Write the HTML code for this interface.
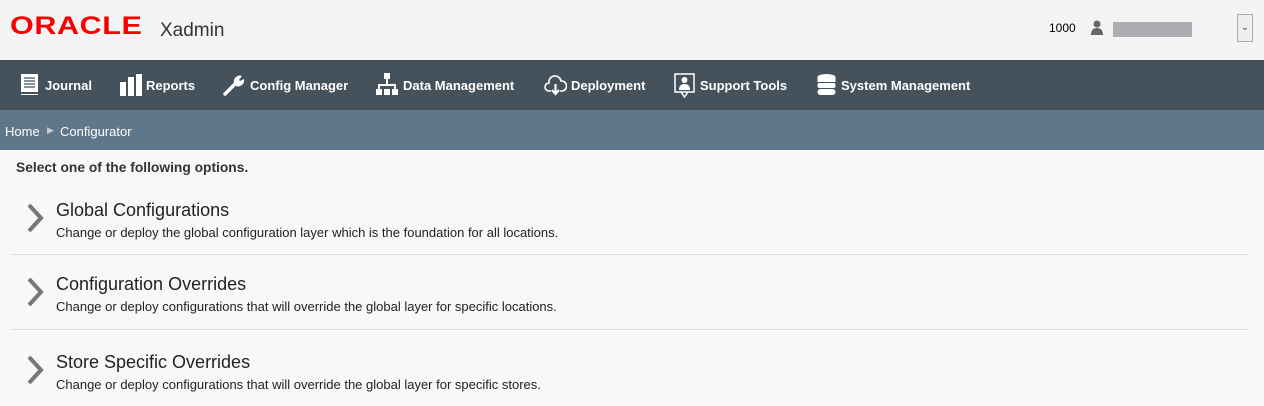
<!DOCTYPE html>
<html><head><style>
*{margin:0;padding:0;box-sizing:border-box}
body{width:1264px;height:406px;overflow:hidden;background:#f8f8f8;font-family:"Liberation Sans",Arial,sans-serif;position:relative}
.hdr{position:absolute;left:0;top:0;width:1264px;height:60px;background:#f4f4f4}
.nav{position:absolute;left:0;top:60px;width:1264px;height:50px;background:#45525c}
.bc{position:absolute;left:0;top:110px;width:1264px;height:40px;background:#5f778a;color:#fff;font-size:13px}
.a{position:absolute;white-space:nowrap}
.ni{position:absolute;top:1px;height:50px;line-height:50px;color:#fff;font-weight:bold;font-size:13px}
.ic{position:absolute;top:13px}
.t{font-size:18px;color:#222}
.d{font-size:13px;color:#222}
.sep{position:absolute;left:11px;width:1237px;height:1px;background:#dcdcdc}
</style></head><body>
<div class="hdr">
 <div class="a" style="left:10px;top:12px;color:#f80000;font-size:25px;font-weight:bold;letter-spacing:0.5px;transform:scaleX(1.22);transform-origin:left">ORACLE</div>
 <div class="a" style="left:160px;top:20px;font-size:19px;color:#333">Xadmin</div>
 <div class="a" style="left:1049px;top:21px;font-size:12px;color:#000">1000</div>
 <svg class="a" style="left:1090px;top:20px" width="14" height="16" viewBox="0 0 14 16"><circle cx="7" cy="4" r="3.5" fill="#666"/><path d="M1 15 Q1 8 7 8 Q13 8 13 15Z" fill="#666"/></svg>
 <div class="a" style="left:1113px;top:22px;width:79px;height:15px;background:#adadb4"></div>
 <div class="a" style="left:1237px;top:14px;width:16px;height:28px;border:1px solid #aaa;background:#eee;font-size:10px;color:#555;text-align:center;line-height:26px">&#8964;</div>
</div>
<div class="nav">
 <svg class="ic" style="left:20px" width="19" height="24" viewBox="0 0 19 24"><rect x="1" y="1" width="17" height="21" fill="#fff"/><path d="M4 5h11M4 8h11M4 11h11M4 14h11" stroke="#45525c" stroke-width="1.2"/><rect x="1" y="19" width="17" height="2" fill="#45525c"/></svg>
 <div class="ni" style="left:45px">Journal</div>
 <svg class="ic" style="left:120px;top:14px" width="22" height="22"><rect x="0" y="8" width="6" height="14" fill="#fff"/><rect x="8" y="3" width="6" height="19" fill="#fff"/><rect x="16" y="0" width="6" height="22" fill="#fff"/></svg>
 <div class="ni" style="left:146px">Reports</div>
 <svg class="ic" style="left:223px;top:14px" width="22" height="22" viewBox="0 0 22 22"><path d="M2 20 L12 10" stroke="#fff" stroke-width="3.5" stroke-linecap="round"/><path d="M11 9 A6 6 0 0 1 19 2 L16 6 L17 7 L21 5 A6 6 0 0 1 13 12Z" fill="#fff"/></svg>
 <div class="ni" style="left:250px">Config Manager</div>
 <svg class="ic" style="left:376px;top:13px" width="22" height="24"><rect x="8" y="0" width="6" height="6" fill="#fff"/><path d="M11 6v6M3 17v-5h16v5" stroke="#fff" stroke-width="2" fill="none"/><rect x="0" y="16" width="6" height="6" fill="#fff"/><rect x="8" y="16" width="6" height="6" fill="#fff"/><rect x="16" y="16" width="6" height="6" fill="#fff"/></svg>
 <div class="ni" style="left:403px">Data Management</div>
 <svg class="ic" style="left:544px;top:14px" width="23" height="23" viewBox="0 0 23 23"><path d="M7 17 H5 A4 4 0 0 1 5 9 A6 6 0 0 1 17 7 A5 5 0 0 1 18 17 H16" stroke="#fff" stroke-width="1.6" fill="none"/><path d="M11.5 10v9M8 16l3.5 4 3.5-4" stroke="#fff" stroke-width="2.2" fill="none"/></svg>
 <div class="ni" style="left:571px">Deployment</div>
 <svg class="ic" style="left:674px;top:13px" width="21" height="25"><rect x="1" y="1" width="19" height="18" stroke="#fff" stroke-width="1.5" fill="none"/><circle cx="10.5" cy="7" r="3" fill="#fff"/><path d="M5 17 Q5 11 10.5 11 Q16 11 16 17Z" fill="#fff"/><path d="M7 19 L10.5 24 L14 19" stroke="#fff" stroke-width="1.5" fill="none"/></svg>
 <div class="ni" style="left:700px">Support Tools</div>
 <svg class="ic" style="left:817px;top:14px" width="19" height="23"><ellipse cx="9.5" cy="3" rx="9" ry="3" fill="#fff"/><rect x="0.5" y="3" width="18" height="5" fill="#fff"/><rect x="0.5" y="9" width="18" height="5" rx="2" fill="#fff"/><rect x="0.5" y="15" width="18" height="6" rx="3" fill="#fff"/></svg>
 <div class="ni" style="left:841px">System Management</div>
</div>
<div class="bc">
 <div class="a" style="left:5px;top:14px">Home</div>
 <div class="a" style="left:47px;top:15px;font-size:9px;color:#ccc">&#9654;</div>
 <div class="a" style="left:60px;top:14px">Configurator</div>
</div>
<div class="a" style="left:16px;top:160px;font-size:13.8px;font-weight:bold;color:#333">Select one of the following options.</div>

<svg class="a" style="left:26px;top:203px" width="20" height="30"><path d="M3 2 L15 15 L3 28" stroke="#777" stroke-width="4" fill="none"/></svg>
<div class="a t" style="left:56px;top:200px">Global Configurations</div>
<div class="a d" style="left:56px;top:225px">Change or deploy the global configuration layer which is the foundation for all locations.</div>
<div class="sep" style="top:254px"></div>

<svg class="a" style="left:26px;top:277px" width="20" height="30"><path d="M3 2 L15 15 L3 28" stroke="#777" stroke-width="4" fill="none"/></svg>
<div class="a t" style="left:56px;top:274px">Configuration Overrides</div>
<div class="a d" style="left:56px;top:299px">Change or deploy configurations that will override the global layer for specific locations.</div>
<div class="sep" style="top:329px"></div>

<svg class="a" style="left:26px;top:355px" width="20" height="30"><path d="M3 2 L15 15 L3 28" stroke="#777" stroke-width="4" fill="none"/></svg>
<div class="a t" style="left:56px;top:352px">Store Specific Overrides</div>
<div class="a d" style="left:56px;top:377px">Change or deploy configurations that will override the global layer for specific stores.</div>
</body></html>
